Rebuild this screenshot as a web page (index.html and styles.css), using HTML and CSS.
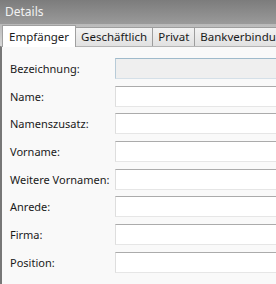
FILE: index.html
```html
<!DOCTYPE html>
<html lang="de">

<head>
    <meta charset="UTF-8">
    <title>Details</title>
    <link rel="stylesheet" href="styles.css">
</head>

<body>
    <div class="window">
        <div class="titlebar">Details</div>

        <div class="tabs">
            <div class="tab active">Empfänger</div>
            <div class="tab">Geschäftlich</div>
            <div class="tab">Privat</div>
            <div class="tab">Bankverbindung</div>
        </div>

        <div class="panel">
            <div class="row">
                <label>Bezeichnung:</label>
                <input type="text" class="field" disabled>
            </div>
            <div class="row">
                <label>Name:</label>
                <input type="text" class="field">
            </div>
            <div class="row">
                <label>Namenszusatz:</label>
                <input type="text" class="field">
            </div>
            <div class="row">
                <label>Vorname:</label>
                <input type="text" class="field">
            </div>
            <div class="row">
                <label>Weitere Vornamen:</label>
                <input type="text" class="field">
            </div>
            <div class="row">
                <label>Anrede:</label>
                <input type="text" class="field">
            </div>
            <div class="row">
                <label>Firma:</label>
                <input type="text" class="field">
            </div>
            <div class="row">
                <label>Position:</label>
                <input type="text" class="field">
            </div>
        </div>
    </div>
</body>

</html>
```

FILE: styles.css
```css
body {
    margin: 0;
    font-family: 'Noto Sans', sans-serif;
    font-size: 11px;
    color: #1a1a1a;
    background: #f9f9f9;
    overflow: hidden;
}

.window {
    width: 276px;
    height: 284px;
    overflow: hidden;
    display: flex;
    flex-direction: column;
}

.titlebar {
    height: 24px;
    line-height: 24px;
    padding-left: 5px;
    color: #f2f2f2;
    font-size: 12px;
    background: linear-gradient(#7c7c7c, #9a9a9a);
    flex: none;
}

.tabs {
    display: flex;
    align-items: flex-end;
    height: 22px;
    padding-left: 2px;
    background: linear-gradient(#b9b9b9, #d8d8d8);
    flex: none;
    white-space: nowrap;
    font-size: 11.5px;
}

.tab {
    height: 18px;
    line-height: 18px;
    padding: 0 5px;
    border: 1px solid #9d9d9d;
    border-bottom: none;
    margin-left: -1px;
    background: linear-gradient(#f2f2f2, #e1e1e1);
}

.tab.active {
    height: 21px;
    line-height: 21px;
    padding: 0 6px;
    margin-left: 0;
    background: #fff;
    border-color: #a0a0a0;
    position: relative;
    z-index: 1;
    margin-bottom: -1px;
}

.panel {
    flex: 1;
    border-left: 2px solid #777;
    border-top: 1px solid #b4b4b4;
    background: #f9f9f9;
    padding: 11px 0 0 8px;
    display: flex;
    flex-direction: column;
    gap: 6.7px;
}

.row {
    display: flex;
    align-items: center;
    height: 21px;
}

.row label {
    width: 105px;
    flex: none;
    white-space: nowrap;
}

.field {
    flex: none;
    width: 200px;
    height: 21px;
    box-sizing: border-box;
    margin: 0;
    padding: 0 3px;
    background: #fff;
    border: 1px solid #dedede;
    border-top-color: #ababab;
    border-bottom-color: #e6e6e6;
    border-radius: 0;
}

.field:disabled {
    background: #efefef;
    border-color: #b7cbd8;
    border-top-color: #9fbacb;
    border-bottom-color: #d5e0e8;
}
```
